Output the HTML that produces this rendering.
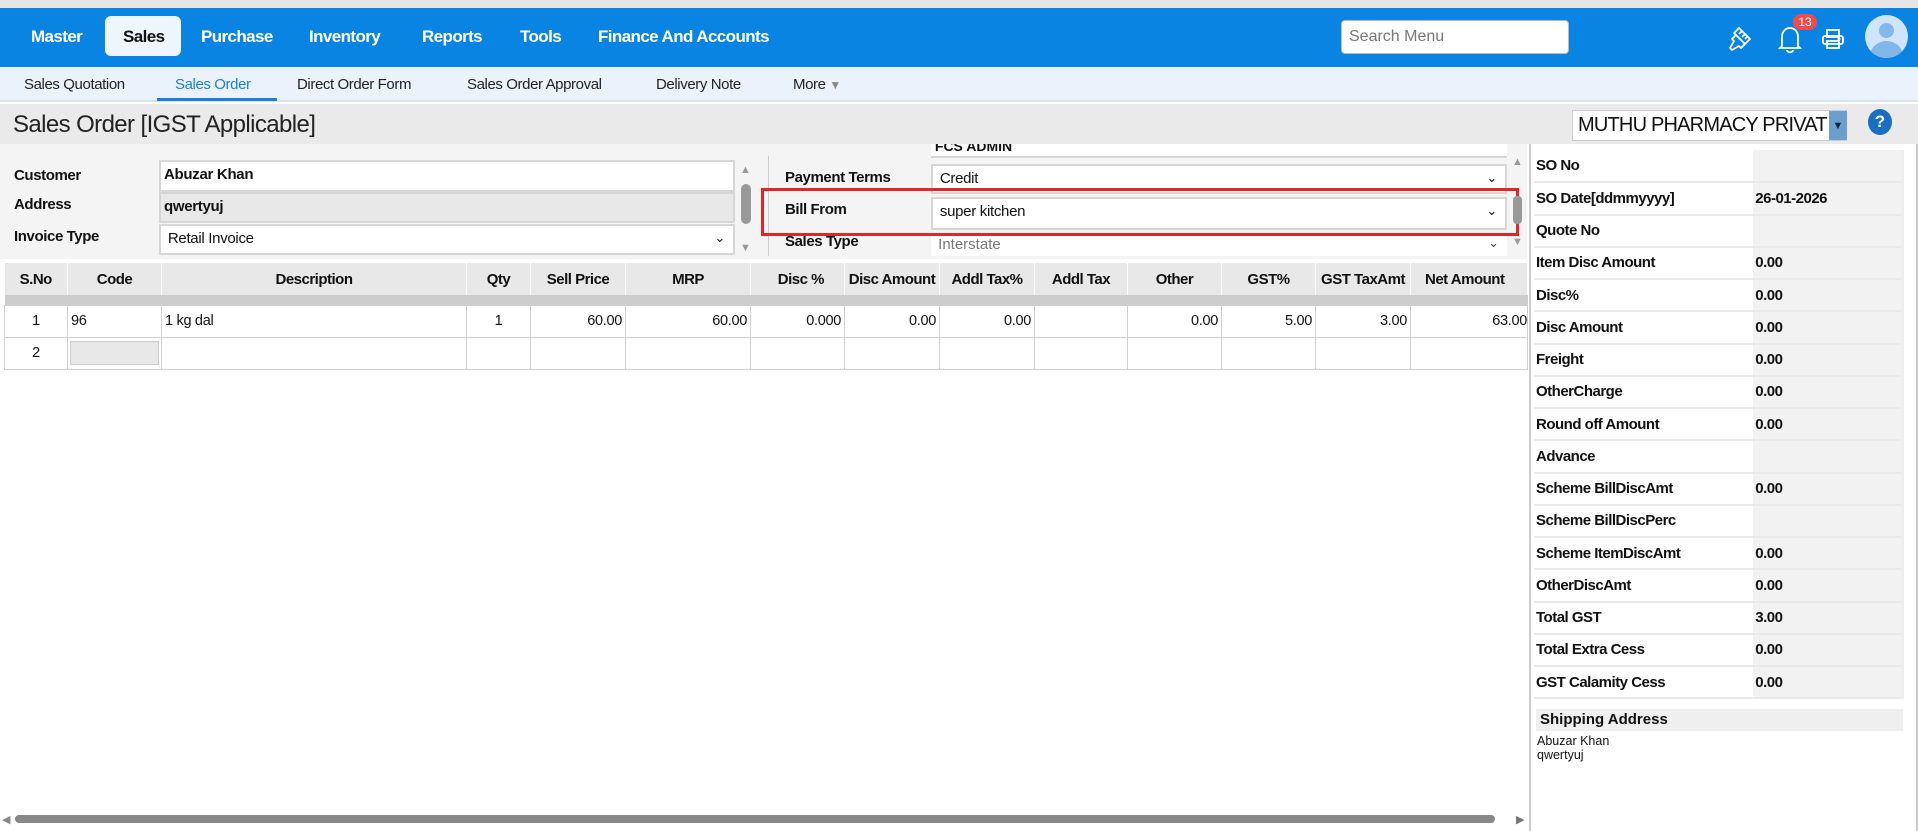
<!DOCTYPE html>
<html><head><meta charset="utf-8"><style>
*{box-sizing:border-box;margin:0;padding:0}
body{width:1918px;height:831px;overflow:hidden;background:#fff;font-family:"Liberation Sans",Arial,sans-serif;position:relative;color:#111}
.a{position:absolute}
.top{left:0;top:0;width:1918px;height:8px;background:#e6e6e6}
.nav{left:0;top:8px;width:1918px;height:59px;background:#0a84e3}
.nav .m{position:absolute;top:19px;color:#fff;font-weight:bold;font-size:17px;letter-spacing:-0.6px}
.act{left:105px;top:8px;width:76px;height:40px;background:#eef5fc;border-radius:6px}
.sub{left:0;top:67px;width:1918px;height:35px;background:#eaf3fb;border-bottom:2px solid #d5e4f1}
.sub span{position:absolute;top:9px;font-size:15px;color:#222;letter-spacing:-0.4px}
.tbar{left:0;top:104px;width:1918px;height:40px;background:#eaeaea}
.form{left:0;top:144px;width:1527px;height:115px;background:#f4f4f4}
.lbl{font-size:15px;font-weight:bold;letter-spacing:-0.4px}
.inp{background:#fff;border:2px solid #d6d6d6;font-size:15px;padding:4px 3px;letter-spacing:-0.3px}
.chev{position:absolute;right:8px;top:4px;font-size:13px}
table{border-collapse:collapse}
.grid td{border:1px solid #d0d0d0;font-size:14.5px;height:32px;padding:0 3px;letter-spacing:-0.3px}
.grid th{background:#e8e8e8;font-size:15px;height:32px;border-right:1px solid #fff;letter-spacing:-0.5px}
.rp{left:1529px;top:144px;width:389px;height:687px;border-left:2px solid #ccc;border-right:2px solid #ccc;background:#fff}
.rt td{height:32.25px;border-bottom:2px solid #eaeaea;font-size:15px;font-weight:bold;letter-spacing:-0.5px;padding-left:2px}
.rt td.v{background:#f2f2f2}
</style></head><body>
<div class="a top"></div>
<div class="a nav">
<div class="a act"></div>
<span class="m" style="left:31px">Master</span>
<span class="m" style="left:123px;color:#111">Sales</span>
<span class="m" style="left:201px">Purchase</span>
<span class="m" style="left:309px">Inventory</span>
<span class="m" style="left:422px">Reports</span>
<span class="m" style="left:520px">Tools</span>
<span class="m" style="left:598px">Finance And Accounts</span>
<div class="a" style="left:1341px;top:12px;width:228px;height:34px;background:#fff;border:1px solid #bbb;border-radius:4px;color:#777;font-size:16px;padding:7px 7px">Search Menu</div>
<svg class="a" style="left:1726px;top:14px" width="30" height="32" viewBox="0 0 30 32" fill="none" stroke="#fff" stroke-width="1.8" stroke-linejoin="round"><path d="M13 6 L24 17 L19 22 L8 11 Z"/><path d="M16 9 L13 12 M19 12 L16 15 M21 15 L19 17"/><path d="M10 13 L6 17 L8 19 L4 26 L6 28 L13 24 L15 26 L19 22"/></svg>
<svg class="a" style="left:1777px;top:16px" width="26" height="30" viewBox="0 0 26 30" fill="none" stroke="#fff" stroke-width="1.8"><path d="M5 22 L5 13 C5 7 9 4 13 4 C17 4 21 7 21 13 L21 22 L23 24 L3 24 Z"/><path d="M10 26 C10 29 16 29 16 26"/></svg>
<div class="a" style="left:1793px;top:6px;width:24px;height:16px;background:#f24b4b;border-radius:8px;color:#fff;font-size:12px;text-align:center;line-height:16px">13</div>
<svg class="a" style="left:1821px;top:19px" width="24" height="24" viewBox="0 0 24 24" fill="none" stroke="#fff" stroke-width="1.8"><rect x="6" y="3" width="12" height="7"/><rect x="2" y="9" width="20" height="8" rx="2"/><rect x="6" y="14" width="12" height="7"/><circle cx="18" cy="12" r="0.6" fill="#fff"/></svg>
<div class="a" style="left:1865px;top:7px;width:43px;height:43px;border-radius:50%;background:#cfe5fb;overflow:hidden">
<div class="a" style="left:14px;top:8px;width:15px;height:15px;border-radius:50%;background:#82b7ea"></div>
<div class="a" style="left:5px;top:26px;width:33px;height:30px;border-radius:50%;background:#82b7ea"></div></div>
</div>
<div class="a sub">
<span style="left:24px">Sales Quotation</span>
<span style="left:175px;color:#1b7fd6">Sales Order</span>
<div class="a" style="left:157px;top:31px;width:120px;height:3px;background:#1b7fd6"></div>
<span style="left:297px">Direct Order Form</span>
<span style="left:467px">Sales Order Approval</span>
<span style="left:656px">Delivery Note</span>
<span style="left:793px">More <span style="position:static;color:#888;font-size:12px">&#9660;</span></span>
</div>
<div class="a tbar"><span class="a" style="left:13px;top:7px;font-size:24px;letter-spacing:-0.6px;color:#222">Sales Order [IGST Applicable]</span>
<div class="a" style="left:1572px;top:6px;width:275px;height:31px;background:#fff;border:1px solid #ccc;font-size:20px;padding:3px 5px;letter-spacing:-0.8px;overflow:hidden;white-space:nowrap">MUTHU PHARMACY PRIVAT</div>
<div class="a" style="left:1829px;top:7px;width:18px;height:29px;background:#6d9ed0;color:#123;font-size:11px;text-align:center;line-height:31px">&#9660;</div>
<div class="a" style="left:1868px;top:5px;width:24px;height:26px;border-radius:50%;background:#1a6fc4;color:#fff;font-weight:bold;font-size:17px;text-align:center;line-height:26px">?</div>
</div>
<div class="a form">
<span class="a lbl" style="left:14px;top:23px">Customer</span>
<span class="a lbl" style="left:14px;top:52px">Address</span>
<span class="a lbl" style="left:14px;top:84px">Invoice Type</span>
<div class="a inp lbl" style="left:159px;top:16px;width:576px;height:32px;font-weight:bold">Abuzar Khan</div>
<div class="a inp lbl" style="left:159px;top:48px;width:576px;height:31px;background:#e8e8e8;font-weight:bold">qwertyuj</div>
<div class="a inp" style="left:159px;top:80px;width:576px;height:31px">&nbsp;Retail Invoice<span class="chev">&#8964;</span></div>
<div class="a" style="left:740px;top:20px;color:#999;font-size:11px">&#9650;</div>
<div class="a" style="left:741px;top:40px;width:10px;height:40px;background:#999;border-radius:5px"></div>
<div class="a" style="left:740px;top:98px;color:#999;font-size:11px">&#9660;</div>
<div class="a" style="left:768px;top:12px;width:1px;height:100px;background:#ccc"></div>
<span class="a lbl" style="left:785px;top:25px">Payment Terms</span>
<span class="a lbl" style="left:785px;top:57px">Bill From</span>
<span class="a lbl" style="left:785px;top:89px">Sales Type</span>
<div class="a" style="left:931px;top:0;width:576px;height:14px;background:#fff;border-bottom:2px solid #d6d6d6;overflow:hidden;font-size:14px;font-weight:bold;line-height:4px">&nbsp;FCS ADMIN</div>
<div class="a inp" style="left:931px;top:20px;width:576px;height:30px">&nbsp;Credit<span class="chev">&#8964;</span></div>
<div class="a inp" style="left:931px;top:53px;width:576px;height:33px">&nbsp;super kitchen<span class="chev">&#8964;</span></div>
<div class="a" style="left:931px;top:90px;width:576px;height:22px;background:#fff;font-size:15px;color:#777;padding:2px 3px">&nbsp;Interstate<span class="chev" style="top:1px;color:#444">&#8964;</span></div>
<div class="a" style="left:761px;top:44px;width:758px;height:48px;border:3px solid #e12626"></div>
<div class="a" style="left:1512px;top:12px;color:#999;font-size:11px">&#9650;</div>
<div class="a" style="left:1513px;top:52px;width:9px;height:28px;background:#999;border-radius:4px"></div>
<div class="a" style="left:1512px;top:92px;color:#999;font-size:11px">&#9660;</div>
</div>
<table class="a grid" style="left:4px;top:263px;width:1523px;table-layout:fixed">
<colgroup><col style="width:63px"><col style="width:94px"><col style="width:305px"><col style="width:64px"><col style="width:95px"><col style="width:125px"><col style="width:94px"><col style="width:95px"><col style="width:95px"><col style="width:93px"><col style="width:94px"><col style="width:94px"><col style="width:95px"><col style="width:117px"></colgroup>
<tr><th>S.No</th><th>Code</th><th>Description</th><th>Qty</th><th>Sell Price</th><th>MRP</th><th style="text-align:right;padding-right:20px">Disc %</th><th>Disc Amount</th><th>Addl Tax%</th><th>Addl Tax</th><th>Other</th><th>GST%</th><th>GST TaxAmt</th><th style="text-align:left;padding-left:14px">Net Amount</th></tr>
<tr><td colspan="14" style="height:10px;background:#cdcdcd;border:0;padding:0"></td></tr>
<tr><td style="text-align:center">1</td><td>96</td><td>1 kg dal</td><td style="text-align:center">1</td><td style="text-align:right">60.00</td><td style="text-align:right">60.00</td><td style="text-align:right">0.000</td><td style="text-align:right">0.00</td><td style="text-align:right">0.00</td><td></td><td style="text-align:right">0.00</td><td style="text-align:right">5.00</td><td style="text-align:right">3.00</td><td style="text-align:right;overflow:hidden;white-space:nowrap;padding-right:0">63.00</td></tr>
<tr><td style="text-align:center">2</td><td style="padding:2px"><div style="height:24px;background:#e8e8e8;border:1px solid #ccc"></div></td><td></td><td></td><td></td><td></td><td></td><td></td><td></td><td></td><td></td><td></td><td></td><td></td></tr>
</table>
<div class="a" style="left:2px;top:813px;color:#888;font-size:11px">&#9664;</div>
<div class="a" style="left:15px;top:815px;width:1480px;height:8px;background:#888;border-radius:4px"></div>
<div class="a" style="left:1516px;top:813px;color:#777;font-size:11px">&#9654;</div>
<div class="a rp">
<table class="a rt" style="left:3px;top:6px;width:370px;background:#f4f4f4;border-right:3px solid #eee">
<colgroup><col style="width:220px"><col style="width:150px"></colgroup>
<tr><td style="background:#fff">SO No</td><td class="v"></td></tr>
<tr><td style="background:#fff">SO Date[ddmmyyyy]</td><td class="v">26-01-2026</td></tr>
<tr><td style="background:#fff">Quote No</td><td class="v"></td></tr>
<tr><td style="background:#fff">Item Disc Amount</td><td class="v">0.00</td></tr>
<tr><td style="background:#fff">Disc%</td><td class="v">0.00</td></tr>
<tr><td style="background:#fff">Disc Amount</td><td class="v">0.00</td></tr>
<tr><td style="background:#fff">Freight</td><td class="v">0.00</td></tr>
<tr><td style="background:#fff">OtherCharge</td><td class="v">0.00</td></tr>
<tr><td style="background:#fff">Round off Amount</td><td class="v">0.00</td></tr>
<tr><td style="background:#fff">Advance</td><td class="v"></td></tr>
<tr><td style="background:#fff">Scheme BillDiscAmt</td><td class="v">0.00</td></tr>
<tr><td style="background:#fff">Scheme BillDiscPerc</td><td class="v"></td></tr>
<tr><td style="background:#fff">Scheme ItemDiscAmt</td><td class="v">0.00</td></tr>
<tr><td style="background:#fff">OtherDiscAmt</td><td class="v">0.00</td></tr>
<tr><td style="background:#fff">Total GST</td><td class="v">3.00</td></tr>
<tr><td style="background:#fff">Total Extra Cess</td><td class="v">0.00</td></tr>
<tr><td style="background:#fff">GST Calamity Cess</td><td class="v">0.00</td></tr>
</table>
<div class="a" style="left:5px;top:565px;width:367px;height:22px;background:#efefef;font-weight:bold;font-size:15px;padding:2px 4px">Shipping Address</div>
<div class="a" style="left:6px;top:590px;font-size:12.5px;line-height:14px">Abuzar Khan<br>qwertyuj</div>
</div>
</body></html>
